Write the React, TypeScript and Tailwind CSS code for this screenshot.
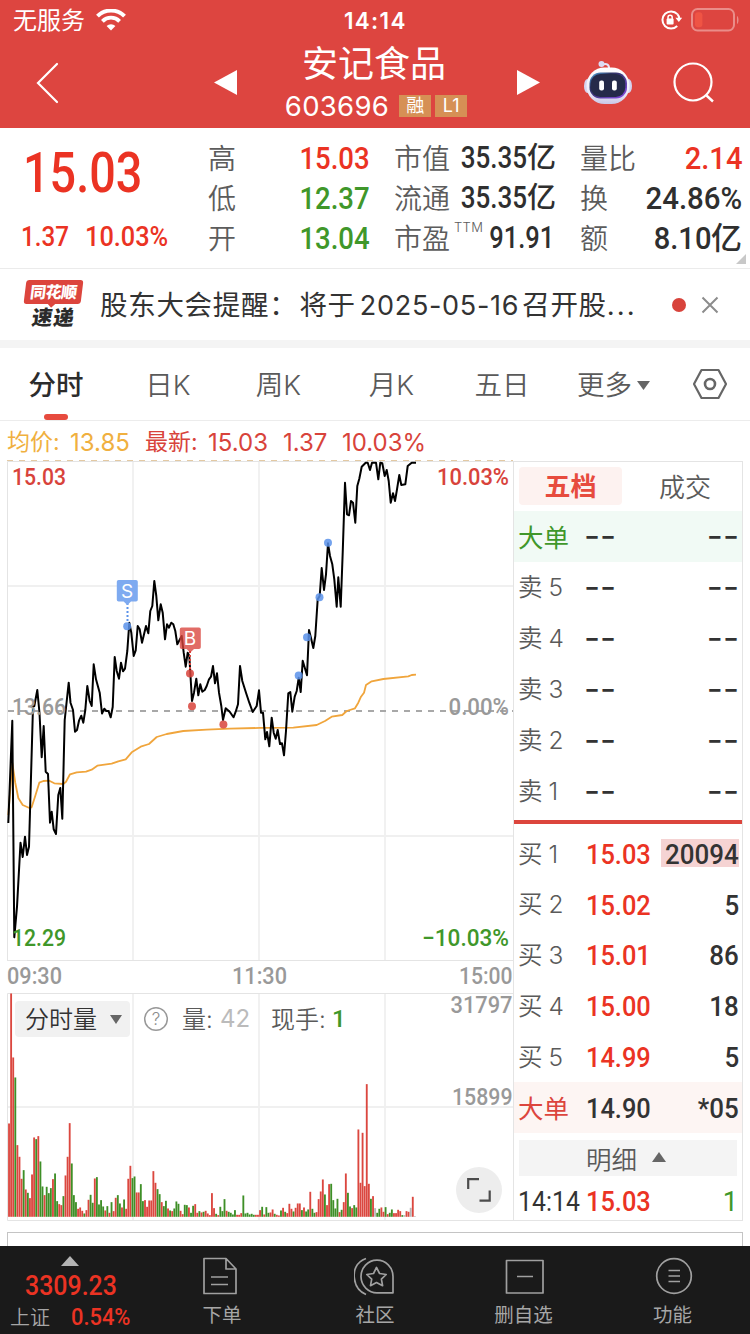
import React from "react";
import clsx from "clsx";

const PRICE_POINTS =
  "8.3,823 12.3,720.7 14.3,937.3 17,906.7 20.5,842.7 22.7,857 25,836.7 27,855 29,846.7 33,706.7 34.3,706 37.3,690 39.5,713 41.7,757.3 43.7,726 45.7,771.7 48,774 50,822.7 51.7,811.7 53.7,829.3 56,834 58.3,795 60.3,788 62.3,818.7 64.7,720 68.7,682.7 70.5,702.7 73,710 75,731.7 77,730 79,720.7 81.3,715.7 83.3,722.7 85.3,710 87.3,686 89.7,701 91.7,706 93.7,664.3 96,679.3 99.7,692.7 102,713.5 104.3,708.7 106.3,711 108.5,711 110.7,717.3 112.7,707 114.7,657 116.7,671 119,678.7 121,662.7 123,671.3 125,668.7 127.3,651 129.3,622.7 131.3,632.7 133.7,656 135.7,650.3 137.7,626 139.7,629.3 142,642.7 146,626 148.3,633.3 150.3,611 152.3,606 154.3,581 156.3,596 158.3,620.3 160.7,604.3 162.7,612.7 165,639.3 167,624.3 169,627.7 171.3,622.7 173.3,624.3 175.3,631 177.3,644.3 181.7,636 183.7,652.7 185.7,666.7 187.7,652.7 189.3,656 192,701 194,692.7 196.3,678.7 198.3,695.3 200.3,684.3 202.3,691.7 204.7,690 206.7,686 209,679.3 211,676.7 213,666 215,683.3 217,673.3 219,692.7 221.3,706 223,720 225.7,708.3 229.7,711.7 233.5,717.3 235.7,711.7 238,704.3 240,666 242.3,681 246,692.7 249.3,702.7 252.7,712 256.7,706 259,690.3 261,712.7 263,712.7 265.3,739.3 267,732 269.3,746.3 271.7,717.7 273.7,732.7 275.7,738.7 277.7,730 280,744 282,743.3 284,755.3 286,731 288.3,693.3 290.3,692 292.3,711.7 294.7,696.7 296.7,691 298.7,677.7 300.7,692 302.7,660.7 307,675.3 309,630 311.3,639.3 313.3,648 315.3,636 317.7,599.3 319.7,596 321.7,568 324,590 326,574.3 328,543.3 330,556 332.3,564.3 334.3,579.3 336.7,606.7 338.3,577.3 340.7,606.7 342.7,552.7 345,482.7 347,514.3 349,515.3 351,501 353,502.7 355.3,522.7 357.3,486 359.3,478.7 361.7,466.7 365.7,462.7 367.7,462.7 370,470 372,462.7 376,462.7 378.3,479.3 380.3,462.7 382.3,463.3 384.7,476 386.7,470 388.7,481 390.7,502.7 393,493.3 395,501 397,489.3 399.3,475 401.3,485 405.3,484.3 407.7,466 411.7,462.7 416,462.7";

const AVG_POINTS =
  "8.3,815 12.3,763 15.3,783 18.3,798 22.7,805 30,808.3 31.7,807 35,796.7 39.3,782.7 43.3,781 49.3,780.7 54.3,783.3 63.3,784 66,781.7 70,774.3 76.7,772.3 86,771.7 91.7,769.7 97.3,765.7 111.7,763.7 118.3,761.3 125.7,759.3 131.7,752.3 140.7,746.7 149,744 156.7,737 166.7,734 183.3,731 206.7,729.7 230,728.7 260,727.9 293.3,727.7 316.7,725 325,721 331.7,716.7 342.3,715 346.7,711 355,708.3 358.3,702.7 361,696.7 364,692.7 366,685 371.7,681.3 383.3,679 408.3,676.3 411.7,675 416,674.7";

// one entry per minute: r = up, g = down, n = flat
const VOLUMES =
  "r280 r670 r478 g418 r215 r180 r114 g140 r82 g72 r56 r127 r238 g233 r242 g166 g91 r65 g90 g71 g86 r113 g130 g47 r38 r35 g62 r124 r180 r281 g160 g65 g44 r24 r28 r18 g10 r20 r51 g66 g42 r115 g119 g37 g50 g31 r19 g32 r12 g44 r17 r57 g65 g40 r28 g52 r24 r114 r153 g116 g121 r73 r73 g98 g47 r50 r30 r49 r49 r137 r102 g83 g68 r44 g32 g48 r25 g19 r17 g25 g46 g39 r18 r8 g36 g35 r28 g12 g33 r38 r12 g17 r13 g15 r18 r10 r5 r71 r26 g9 r5 g30 g17 g53 r18 g15 g12 g7 g20 r6 r6 r11 g64 g10 g12 g7 g9 g6 r6 r6 r20 g30 r7 g29 g12 r13 r22 g9 r6 r4 g19 r27 g15 r11 r39 r24 g16 r27 r40 r40 g20 r28 g16 g22 r75 g24 g12 r14 r53 r76 r112 g67 r35 r98 g99 g50 g25 g54 r14 g21 r44 r130 g72 g31 r26 g35 g28 r262 r102 r252 r92 r398 r99 g54 r62 n26 g12 g24 r28 r15 g29 r8 g12 g22 r11 r11 r21 r17 g5 n5 r17 r15 n27 r60 n2";

const VOLUME_COLORS: Record<string, string> = { r: "#db473f", g: "#3e8f27", n: "#b8b8b8" };

const BUY_DOTS = [[190, 673.5], [192, 706.3], [223.4, 724.6]];
const SELL_DOTS = [[127.2, 626.3], [298.7, 675.4], [307, 637.2], [319.5, 597.2], [328, 542.8]];

// condensed figures used for all quote numbers
function Num({ children, className }: { children: React.ReactNode; className?: string }) {
  return (
    <span className={clsx("inline-block whitespace-nowrap font-[Roboto,sans-serif]", className)}>
      {children}
    </span>
  );
}

function StatusBar() {
  return (
    <div className="flex h-10 items-center pl-[13px] pr-[11px]">
      <div className="flex w-[331px] items-center">
        <span className="w-[84px] pt-0.5 text-[24px] leading-[38px]">无服务</span>
        <svg width="30" height="22" viewBox="0 0 30 22" className="-ml-px" fill="none">
          <path d="M1.5 7.2a19 19 0 0 1 27 0" stroke="#fff" strokeWidth="4" />
          <path d="M6.4 12.3a12 12 0 0 1 17.2 0" stroke="#fff" strokeWidth="3.8" />
          <path d="M10.6 17a6.2 6.2 0 0 1 8.8 0L15 21.6z" fill="#fff" />
        </svg>
      </div>
      <span className="pt-px text-[22.5px] font-semibold tracking-[1.3px]">14:14</span>
      <div className="ml-auto flex items-center gap-[9px]">
        <svg width="22" height="22" viewBox="0 0 22 22" fill="none">
          <path d="M17.4 5.2A8.6 8.6 0 1 0 17.2 17" stroke="#fff" strokeWidth="2" />
          <path d="M17.4 5.2a8.6 8.6 0 0 1 1.9 4" stroke="#fff" strokeWidth="2" />
          <path d="M15.4 8.8h6.8L18.8 13z" fill="#fff" />
          <rect x="6.6" y="9.6" width="7" height="5.8" rx="1" fill="#fff" />
          <path d="M8 10V8.4a2.1 2.1 0 0 1 4.2 0V10" stroke="#fff" strokeWidth="1.5" />
        </svg>
        <svg width="48" height="24" viewBox="0 0 48 24" fill="none">
          <rect x="1" y="1" width="42" height="21.5" rx="5.5" stroke="#ea8d89" strokeWidth="2" />
          <path d="M46 8v8c2-1 2-7 0-8z" fill="#ea8d89" />
          <rect x="4" y="4.3" width="7.4" height="15" rx="3" fill="#ef5444" />
        </svg>
      </div>
    </div>
  );
}

function Robot() {
  return (
    <svg width="50" height="46" viewBox="0 0 50 46">
      <defs>
        <linearGradient id="shell" x1="0" y1="0" x2="0" y2="1">
          <stop offset="0" stopColor="#ffffff" />
          <stop offset="0.7" stopColor="#eceaf8" />
          <stop offset="1" stopColor="#c9c6e6" />
        </linearGradient>
        <linearGradient id="visor" x1="0" y1="0" x2="1" y2="1">
          <stop offset="0" stopColor="#59b3ea" />
          <stop offset="0.3" stopColor="#2b3160" />
          <stop offset="1" stopColor="#8b4be8" />
        </linearGradient>
      </defs>
      <path d="M19 4.5c5-1.5 7.5 0 7 5" fill="none" stroke="#e8e4f6" strokeWidth="2" />
      <circle cx="18.5" cy="4" r="3" fill="#dcdaf2" />
      <ellipse cx="4.5" cy="26" rx="3.5" ry="7" fill="#d5d3ef" />
      <ellipse cx="45.5" cy="26" rx="3.5" ry="7" fill="#d5d3ef" />
      <rect x="3.5" y="7.5" width="43" height="36.5" rx="18" fill="url(#shell)" />
      <rect x="6.5" y="12.5" width="37.5" height="26" rx="11" fill="url(#visor)" />
      <rect x="7.8" y="14" width="34.5" height="23" rx="9.5" fill="#252a49" />
      <rect x="16.2" y="20.5" width="4.8" height="10" rx="2" fill="#fff" />
      <rect x="29" y="20.5" width="4.8" height="10" rx="2" fill="#fff" />
    </svg>
  );
}

function Header() {
  return (
    <header className="h-32 shrink-0 bg-[#dd4540] text-white">
      <StatusBar />
      <div className="flex h-[88px] items-start pl-9">
        <svg width="24" height="42" viewBox="0 0 24 42" fill="none" className="mt-[22px]">
          <path d="M21 2 2 21l19 19" stroke="#fff" strokeWidth="2.2" strokeLinecap="round" />
        </svg>
        <svg width="24" height="26" viewBox="0 0 24 26" className="ml-[154px] mt-[30px]">
          <path d="M0 12.5 23 0v25z" fill="#fff" />
        </svg>
        <div className="ml-[34px] flex w-[204px] flex-col items-center pt-0.5">
          <h1 className="text-[36px] leading-[44px]">安记食品</h1>
          <div className="mt-[5px] flex h-[30px] items-center pl-1">
            <span className="text-[27.5px] leading-[30px] tracking-[0.3px]">603696</span>
            <span className="ml-2.5 flex h-[22px] w-8 items-center justify-center bg-[#d69055] text-[18px] leading-none">融</span>
            <span className="ml-1 flex h-[22px] w-8 items-center justify-center bg-[#d69055] text-[18px] leading-none">L1</span>
          </div>
        </div>
        <svg width="24" height="26" viewBox="0 0 24 26" className="ml-[41px] mt-[30px]">
          <path d="M23 12.5 0 0v25z" fill="#fff" />
        </svg>
        <div className="ml-[42px] mt-5">
          <Robot />
        </div>
        <svg width="42" height="42" viewBox="0 0 42 42" fill="none" className="ml-10 mt-[22px]">
          <circle cx="20" cy="20" r="18.5" stroke="#fff" strokeWidth="2.2" />
          <path d="m33.5 33.5 6.5 6" stroke="#fff" strokeWidth="2.4" />
        </svg>
      </div>
    </header>
  );
}

interface CellProps {
  label: string;
  sup?: string;
  value: string;
  unit?: string;
  color: string;
  numClass?: string;
  unitClass?: string;
}

function Cell({ label, sup, value, unit, color, numClass = "scale-x-[0.86] text-[32px]", unitClass = "text-[29px]" }: CellProps) {
  return (
    <div className="flex h-10 items-center justify-between">
      <span className="flex items-start whitespace-nowrap pt-0.5 text-[28px] leading-[38px] font-[350] text-[#5c5c5c]">
        {label}
        {sup && <span className="ml-1 text-[13px] leading-[14px] tracking-[0.3px]">{sup}</span>}
      </span>
      <span className={clsx("-ml-5 flex items-center", color)}>
        <Num className={clsx("origin-right leading-10 font-medium", numClass)}>{value}</Num>
        {unit && <span className={clsx("leading-10 font-medium", unitClass)}>{unit}</span>}
      </span>
    </div>
  );
}

function Quote() {
  return (
    <section className="relative flex h-[141px] shrink-0 border-b border-[#ebebeb] pt-2.5">
      <div className="w-[208px] text-[#eb3323]">
        <Num className="mt-[3px] ml-[23px] origin-left scale-x-[0.85] text-[55px] leading-[64px] font-medium">15.03</Num>
        <div className="mt-4 flex">
          <Num className="ml-[21px] w-[64px] origin-left scale-x-[0.88] text-[27.5px] leading-8 font-medium">1.37</Num>
          <Num className="origin-left scale-x-[0.92] text-[27.5px] leading-8 font-medium">10.03%</Num>
        </div>
      </div>
      <div className="w-[162px]">
        <Cell label="高" value="15.03" color="text-[#eb3323]" />
        <Cell label="低" value="12.37" color="text-[#40972a]" />
        <Cell label="开" value="13.04" color="text-[#40972a]" />
      </div>
      <div className="ml-6 w-[162px]">
        <Cell label="市值" value="35.35" unit="亿" color="text-[#2f2f2f]" numClass="scale-x-[0.84] text-[31px]" />
        <Cell label="流通" value="35.35" unit="亿" color="text-[#2f2f2f]" numClass="scale-x-[0.84] text-[31px]" />
        <Cell label="市盈" sup="TTM" value="91.91" color="text-[#2f2f2f]" numClass="mr-0.5 scale-x-[0.82] text-[31px]" />
      </div>
      <div className="ml-6 w-[162px]">
        <Cell label="量比" value="2.14" color="text-[#eb3323]" numClass="scale-x-[0.91] text-[32px]" />
        <Cell label="换" value="24.86%" color="text-[#2f2f2f]" numClass="scale-x-[0.92] text-[32px]" />
        <Cell label="额" value="8.10" unit="亿" color="text-[#2f2f2f]" numClass="scale-x-[0.91] text-[32px]" unitClass="text-[31px]" />
      </div>
      <svg width="10" height="10" viewBox="0 0 10 10" className="absolute bottom-1 right-1">
        <path d="M10 0v10H0z" fill="#c8c8c8" />
      </svg>
    </section>
  );
}

function Notice() {
  return (
    <section className="flex h-[79px] shrink-0 items-center border-b-8 border-[#f4f4f4] pl-[23px]">
      <div className="flex w-[60px] flex-col items-center">
        <div className="relative flex h-6 w-[57px] -skew-x-[7deg] items-center justify-center rounded-[3px] bg-[#dc453d] text-[16px] leading-none font-black text-white">
          <span className="-tracking-[0.5px]">同花顺</span>
          <span className="absolute -bottom-0.5 left-6 size-2 rotate-45 bg-[#dc453d]" />
        </div>
        <div className="mt-0.5 -skew-x-[8deg] text-[20.5px] leading-6 font-black tracking-[1px] text-[#2b2b2b]">速递</div>
      </div>
      <p className="ml-[17px] w-[572px] whitespace-nowrap pt-0.5 text-[27.5px] leading-10 tracking-[0.7px] text-[#333]">
        股东大会提醒：<span className="ml-0.5">将于</span>
        <span className="ml-1 mr-[3px] text-[27px] tracking-[0.7px]">2025-05-16</span>召开股<span className="tracking-[2px]">...</span>
      </p>
      <span className="size-3.5 rounded-full bg-[#d8433b]" />
      <svg width="18" height="18" viewBox="0 0 18 18" className="ml-[15px]">
        <path d="m1.5 1.5 15 15m0-15-15 15" stroke="#8c8c8c" strokeWidth="2" />
      </svg>
    </section>
  );
}

function Tabs() {
  return (
    <nav className="flex h-[73px] shrink-0 items-start border-b border-[#ececec] text-[27.5px] leading-[74px] font-[350] text-[#5a5a5a]">
      <div className="flex w-28 flex-col items-center font-medium text-[#2c2c2c]">
        <span className="h-[66px]">分时</span>
        <span className="h-1.5 w-6 rounded-full bg-[#e74b3e]" />
      </div>
      <span className="w-28 text-center">日K</span>
      <span className="w-[109px] text-center">周K</span>
      <span className="w-[117px] text-center">月K</span>
      <span className="w-[104px] text-center">五日</span>
      <span className="flex w-[120px] items-center pl-[23px]">
        更多
        <svg width="13" height="9" viewBox="0 0 13 9" className="ml-[5px]">
          <path d="M0 0h13L6.5 9z" fill="#666" />
        </svg>
      </span>
      <svg width="36" height="32" viewBox="0 0 36 32" fill="none" className="ml-[18px] mt-5" stroke="#666" strokeWidth="2.2">
        <path d="M9.5 2h17L34 16l-7.5 14h-17L2 16z" strokeLinejoin="round" />
        <circle cx="18" cy="16" r="5" strokeWidth="2.6" />
      </svg>
    </nav>
  );
}

interface LabelProps {
  x: number;
  y: number;
  width: number;
  fill: string;
  size?: number;
  children: string;
}

function AxisLabel({ x, y, width, fill, size = 24, children }: LabelProps) {
  return (
    <text x={x} y={y} textLength={width} lengthAdjust="spacingAndGlyphs" fill={fill} fontSize={size} className="font-[Roboto,sans-serif] font-medium">
      {children}
    </text>
  );
}

function PriceChart() {
  return (
    <svg width="513" height="532" viewBox="0 460 513 532" className="block overflow-visible">
      <path d="M7.5 961V461.5H513M7.5 960.5H513" stroke="#e4e4e4" fill="none" />
      <path d="M8 586H513M8 836H513M133 462v498M259 462v498M385 462v498" stroke="#f0f0f0" strokeWidth="1.8" />
      <path d="M7 460.5H513" stroke="#e3c9a3" strokeWidth="1.2" strokeDasharray="6 6" />
      <path d="M8 711H513" stroke="#a8a8a8" strokeWidth="1.8" strokeDasharray="6 6" />
      <polyline points={AVG_POINTS} fill="none" stroke="#f0a53c" strokeWidth="1.8" strokeLinejoin="round" />
      <polyline points={PRICE_POINTS} fill="none" stroke="#000" strokeWidth="2" strokeLinejoin="round" />
      <AxisLabel x={12} y={484.5} width={54} fill="#d8433b">15.03</AxisLabel>
      <AxisLabel x={437} y={484.5} width={72} fill="#d8433b">10.03%</AxisLabel>
      <AxisLabel x={12} y={715} width={54} fill="#999">13.66</AxisLabel>
      <AxisLabel x={448.5} y={715} width={60.5} fill="#999">0.00%</AxisLabel>
      <AxisLabel x={12} y={946} width={54} fill="#40972a">12.29</AxisLabel>
      <AxisLabel x={422} y={946} width={87} fill="#40972a">−10.03%</AxisLabel>
      <AxisLabel x={7} y={984} width={55} fill="#999">09:30</AxisLabel>
      <AxisLabel x={232} y={984} width={55} fill="#999">11:30</AxisLabel>
      <AxisLabel x={459} y={984} width={53.5} fill="#999">15:00</AxisLabel>

      <g fill="#5b92ea" fillOpacity="0.85">
        {SELL_DOTS.map(([x, y]) => (
          <circle key={x} cx={x} cy={y} r="4" />
        ))}
      </g>
      <g fill="#d8433b" fillOpacity="0.85">
        {BUY_DOTS.map(([x, y]) => (
          <circle key={x} cx={x} cy={y} r="4" />
        ))}
      </g>
      <path d="M127.5 603v20" stroke="#5b92ea" strokeWidth="2" strokeDasharray="2 2" />
      <path d="M190 651v20" stroke="#d8433b" strokeWidth="2" strokeDasharray="2 2" />
      <path d="M118.5 580h17.5a1.8 1.8 0 0 1 1.8 1.8v17.9a1.8 1.8 0 0 1-1.8 1.8h-5l-3.7 3.5-3.7-3.5h-5a1.8 1.8 0 0 1-1.8-1.8v-17.9a1.8 1.8 0 0 1 1.8-1.8z" fill="#7eaaf0" />
      <path d="M181.5 627.5H199a1.8 1.8 0 0 1 1.8 1.8v17.9a1.8 1.8 0 0 1-1.8 1.8h-5l-3.7 3.5-3.7-3.5h-5a1.8 1.8 0 0 1-1.8-1.8v-17.9a1.8 1.8 0 0 1 1.8-1.8z" fill="#d8433b" fillOpacity="0.78" />
      <text x="127" y="597.5" textAnchor="middle" fill="#fff" fontSize="19">S</text>
      <text x="190" y="645" textAnchor="middle" fill="#fff" fontSize="19">B</text>
    </svg>
  );
}

function VolumeChart() {
  return (
    <div className="relative">
      <svg width="513" height="230" viewBox="0 992 513 230" className="block overflow-visible">
        <path d="M513 993.5H7.5V1220.5H513" stroke="#e4e4e4" fill="none" />
        <path d="M8 1107H513M133 994v226M259 994v226M385 994v226" stroke="#f0f0f0" strokeWidth="1.8" />
        {VOLUMES.split(" ").map((v, i) => {
          const h = Number(v.slice(1)) / 3;
          return <rect key={i} x={8.1 + i * 2.092} y={1216.8 - h} width="1.85" height={h} fill={VOLUME_COLORS[v[0]]} />;
        })}
        <AxisLabel x={450.5} y={1013} width={62} fill="#999">31797</AxisLabel>
        <AxisLabel x={452} y={1105} width={60.5} fill="#999">15899</AxisLabel>
      </svg>
      <div className="absolute left-[15px] top-[9px] flex h-9 items-center text-[24px] leading-9 font-[350] text-[#5a5a5a]">
        <span className="flex h-9 w-[115px] items-center rounded bg-[#f1f1f1] pl-2.5 pt-0.5 text-[#333]">
          分时量
          <svg width="12" height="9" viewBox="0 0 12 9" className="ml-[13px] -mt-0.5">
            <path d="M0 0h12L6 9z" fill="#666" />
          </svg>
        </span>
        <svg width="26" height="26" viewBox="0 0 26 26" className="ml-[13px]">
          <circle cx="13" cy="13" r="11.3" fill="none" stroke="#999" strokeWidth="1.5" />
          <text x="13" y="19" textAnchor="middle" fontSize="17" fill="#8c8c8c">?</text>
        </svg>
        <span className="ml-[13px] w-[38px] pt-0.5">量:</span>
        <span className="w-[51px] font-normal text-[#bbb]">42</span>
        <span className="w-[61px] pt-0.5">现手:</span>
        <Num className="text-[24px] font-medium text-[#40972a]">1</Num>
      </div>
      <span className="absolute left-[456px] top-[175px] flex size-[46px] items-center justify-center rounded-full bg-[#ededed]">
        <svg width="24" height="24" viewBox="0 0 24 24" fill="none" stroke="#4c4c4c" strokeWidth="2.2">
          <path d="M1.2 11V1.2H12M12.5 22.7H22.7V12.5" />
        </svg>
      </span>
    </div>
  );
}

const SELLS = ["卖 5", "卖 4", "卖 3", "卖 2", "卖 1"];
const BUYS = [
  { label: "买 1", price: "15.03", volume: "20094", marked: true },
  { label: "买 2", price: "15.02", volume: "5" },
  { label: "买 3", price: "15.01", volume: "86" },
  { label: "买 4", price: "15.00", volume: "18" },
  { label: "买 5", price: "14.99", volume: "5" },
];

function SellRow({ label, big }: { label: string; big?: boolean }) {
  return (
    <div className={clsx("flex h-[51px] shrink-0 items-center pl-1 pr-[3px]", big && "bg-[#f1faf5]")}>
      <span className={clsx("w-[66px]", big ? "pt-0.5 text-[25.5px] text-[#40972a]" : "text-[24.5px] font-[350] -tracking-[0.4px] text-[#5a5a5a]")}>
        {label}
      </span>
      <span className="-mt-[3px] text-[35px] leading-none text-[#333]">--</span>
      <span className="-mt-[3px] ml-auto text-[35px] leading-none text-[#333]">--</span>
    </div>
  );
}

interface BuyRowProps {
  label: string;
  price: string;
  volume: string;
  marked?: boolean;
  big?: boolean;
}

function BuyRow({ label, price, volume, marked, big }: BuyRowProps) {
  return (
    <div className={clsx("flex h-[50.8px] shrink-0 items-center pl-1 pr-[3px]", big && "bg-[#fdf5f3]")}>
      <span className={clsx("w-[68px]", big ? "pt-[3px] text-[25.5px] text-[#dc453d]" : "pt-px text-[24.5px] font-[350] -tracking-[0.4px] text-[#5a5a5a]")}>
        {label}
      </span>
      <Num className={clsx("origin-left scale-x-[0.94] pt-1 text-[27px] font-medium", big ? "text-[#333]" : "text-[#eb3323]")}>{price}</Num>
      <span className={clsx("ml-auto flex h-7 items-center justify-end", marked && "w-[78px] bg-[#f5d3d3]")}>
        <Num className="origin-right scale-x-[0.96] pt-1 text-[27px] font-medium text-[#333]">{volume}</Num>
      </span>
    </div>
  );
}

function OrderBook() {
  return (
    <aside className="mt-px flex h-[760px] w-[230px] flex-col border border-[#e4e4e4] leading-none">
      <div className="flex h-[49px] shrink-0 items-center pb-px pl-[5px] text-[26px]">
        <span className="flex h-[38px] w-[103px] items-center justify-center rounded bg-[#fdf2f0] pt-0.5 font-bold text-[#e74b3e]">五档</span>
        <span className="ml-[37px] pt-[3px] font-[350] text-[#5a5a5a]">成交</span>
      </div>
      <SellRow label="大单" big />
      {SELLS.map((s) => (
        <SellRow key={s} label={s} />
      ))}
      <div className="mt-[3px] mb-1 h-1 shrink-0 bg-[#dc453d]" />
      {BUYS.map((b) => (
        <BuyRow key={b.label} {...b} />
      ))}
      <BuyRow label="大单" price="14.90" volume="*05" big />
      <div className="mx-[5px] mt-[7px] flex h-9 shrink-0 items-center justify-center bg-[#f4f4f4] pr-1 pt-1 text-[25.5px] font-[350] text-[#5a5a5a]">
        明细
        <svg width="14" height="10" viewBox="0 0 14 10" className="ml-[15px] -mt-1.5">
          <path d="M7 0l7 10H0z" fill="#666" />
        </svg>
      </div>
      <div className="mt-[7px] flex h-9 shrink-0 items-center pt-1 pl-1 pr-1">
        <Num className="w-[68px] origin-left scale-x-[0.92] text-[27px] text-[#333]">14:14</Num>
        <Num className="origin-left scale-x-[0.94] text-[27px] font-medium text-[#eb3323]">15.03</Num>
        <Num className="ml-auto text-[27px] text-[#40972a]">1</Num>
      </div>
    </aside>
  );
}

function NavItem({ label, className, children }: { label: string; className: string; children: React.ReactNode }) {
  return (
    <div className={clsx("flex flex-col items-center pt-[11px]", className)}>
      <svg width="42" height="40" viewBox="0 0 42 40" fill="none" stroke="#a0a0a0" strokeWidth="1.7" strokeLinejoin="round">
        {children}
      </svg>
      <span className="mt-1 text-[19.5px] leading-7 text-[#a6a6a6]">{label}</span>
    </div>
  );
}

function BottomBar() {
  return (
    <footer className="flex h-[88px] shrink-0 bg-[#1a1a1a]">
      <div className="w-[146px] pt-2.5">
        <svg width="18" height="10" viewBox="0 0 18 10" className="ml-[61px]">
          <path d="M9 0l9 10H0z" fill="#b4b4b4" />
        </svg>
        <Num className="mt-[5px] ml-[25px] block origin-left scale-x-[0.89] text-[28px] leading-[30px] font-medium text-[#eb3323]">3309.23</Num>
        <div className="flex items-center">
          <span className="ml-2.5 w-[61px] pt-0.5 text-[20px] leading-[30px] font-[350] text-[#a6a6a6]">上证</span>
          <Num className="origin-left scale-x-[0.91] text-[24px] leading-[30px] font-medium text-[#eb3323]">0.54%</Num>
        </div>
      </div>
      <NavItem label="下单" className="w-[152px]">
        <path d="M3 1.5h22L35 12v24.5H3zM25 1.5V12h10M10 20h17M10 27.5h17" />
      </NavItem>
      <NavItem label="社区" className="w-[154px]">
        <path d="M39 19.5v16.3H23.5A16 16.3 0 1 1 39 19.5zM12 1.5C2 5-1 14 0.5 22c1 8 6 13 11.5 15.5" />
        <path d="m22.5 10.5 3.1 6 6.6 1-4.8 4.6 1.2 6.6-6.1-3.2-6 3.2 1.2-6.6-4.9-4.6 6.7-1z" />
      </NavItem>
      <NavItem label="删自选" className="w-[143px]">
        <path d="M3.5 3.5H40V36H3.5zM14 19.5h16" />
      </NavItem>
      <NavItem label="功能" className="w-[155px]">
        <circle cx="22" cy="19" r="17.3" />
        <path d="M16.5 13.5H28M16.5 19H28M16.5 24.5H28" />
      </NavItem>
    </footer>
  );
}

export default function App() {
  return (
    <div className="flex h-[1334px] w-[750px] flex-col overflow-hidden bg-white font-[Inter,'Noto_Sans_CJK_SC',sans-serif]">
      <Header />
      <Quote />
      <Notice />
      <Tabs />
      <div className="flex h-[39px] shrink-0 items-center pl-[7px] pt-1 text-[24px] leading-none text-[#d8433b]">
        <span className="w-[63px] text-[23px] text-[#f0b03f]">均价:</span>
        <span className="w-[75px] text-[#f0b03f]">13.85</span>
        <span className="w-[63px] text-[23px]">最新:</span>
        <span className="w-[75px]">15.03</span>
        <span className="w-[59px]">1.37</span>
        <span>10.03%</span>
      </div>
      <main className="flex h-[772px] shrink-0">
        <div className="w-[513px] shrink-0">
          <PriceChart />
          <VolumeChart />
        </div>
        <OrderBook />
      </main>
      <div className="mx-[7px] h-3.5 shrink-0 border border-b-0 border-[#c4c4c4]" />
      <BottomBar />
    </div>
  );
}
